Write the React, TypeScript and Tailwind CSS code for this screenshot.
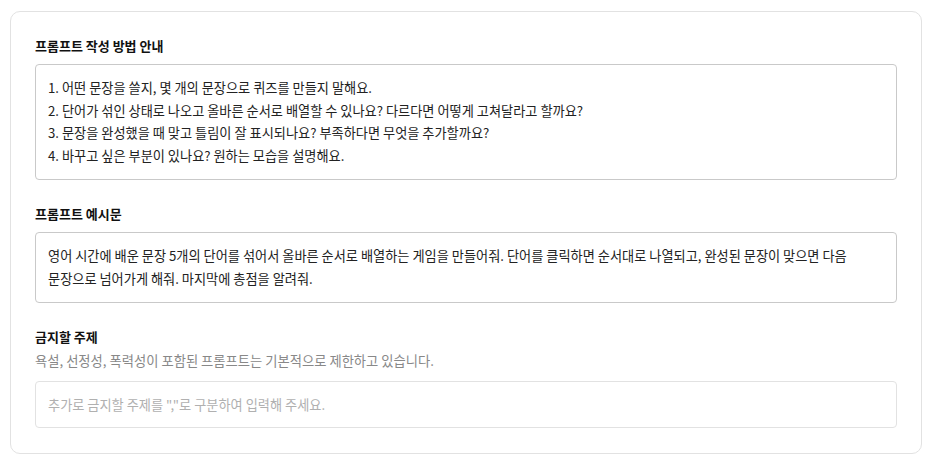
export default function App() {
  const font = { fontFamily: '"Noto Sans CJK KR", "Noto Sans", sans-serif' };
  return (
    <div className="min-h-screen bg-white pl-[10px] pt-[11px]" style={font}>
      <div className="w-[912px] rounded-[10px] border border-[#e2e2e2] bg-white px-6 pt-6 pb-[25px] break-keep">
        {/* 작성 방법 */}
        <h2 className="text-[13px] font-bold leading-5 text-[#111]">프롬프트 작성 방법 안내</h2>
        <div className="mt-2 rounded-[4px] border border-[#c9c9c9] px-3 py-3 text-[13.2px] leading-[22.5px] text-[#222]">
          <p>1. 어떤 문장을 쓸지, 몇 개의 문장으로 퀴즈를 만들지 말해요.</p>
          <p>2. 단어가 섞인 상태로 나오고 올바른 순서로 배열할 수 있나요? 다르다면 어떻게 고쳐달라고 할까요?</p>
          <p>3. 문장을 완성했을 때 맞고 틀림이 잘 표시되나요? 부족하다면 무엇을 추가할까요?</p>
          <p>4. 바꾸고 싶은 부분이 있나요? 원하는 모습을 설명해요.</p>
        </div>

        {/* 예시문 */}
        <h2 className="mt-6 text-[13px] font-bold leading-5 text-[#111]">프롬프트 예시문</h2>
        <div className="mt-2 rounded-[4px] border border-[#c9c9c9] px-3 py-3 text-[13.2px] leading-[22.5px] text-[#222]">
          영어 시간에 배운 문장 5개의 단어를 섞어서 올바른 순서로 배열하는 게임을 만들어줘. 단어를 클릭하면 순서대로 나열되고, 완성된 문장이 맞으면 다음 문장으로 넘어가게 해줘. 마지막에 총점을 알려줘.
        </div>

        {/* 금지할 주제 */}
        <h2 className="mt-6 text-[13px] font-bold leading-5 text-[#111]">금지할 주제</h2>
        <p className="mt-1 text-[13.3px] leading-5 text-[#888]">
          욕설, 선정성, 폭력성이 포함된 프롬프트는 기본적으로 제한하고 있습니다.
        </p>
        <input
          className="mt-[10px] block h-[47px] w-full rounded-[4px] border border-[#e2e2e2] px-3 text-[13.2px] text-[#222] outline-none placeholder:text-[#b0b0b0]"
          style={font}
          placeholder='추가로 금지할 주제를 ","로 구분하여 입력해 주세요.'
        />
      </div>
    </div>
  );
}
